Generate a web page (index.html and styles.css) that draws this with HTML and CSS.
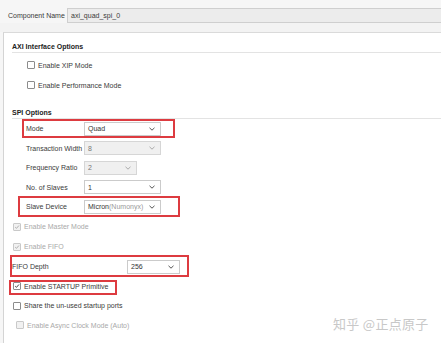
FILE: index.html
```html
<!DOCTYPE html>
<html>
<head>
<meta charset="utf-8">
<link rel="stylesheet" href="styles.css">
</head>
<body>
<div class="top">
  <span class="cname">Component Name</span>
  <div class="cinput">axi_quad_spi_0</div>
</div>
<div class="strip"></div>
<div class="panel">
  <div class="hdr hdr-axi">AXI Interface Options</div>
  <div class="crow indent"><span class="cb"></span><span>Enable XIP Mode</span></div>
  <div class="crow indent"><span class="cb"></span><span>Enable Performance Mode</span></div>

  <div class="hdr hdr-spi">SPI Options</div>
  <div class="frow mark-mode">
    <span class="flabel">Mode</span>
    <div class="sel"><span>Quad</span><svg class="chev" viewBox="0 0 6 4"><path d="M0.5 0.8 L3 3.2 L5.5 0.8"/></svg></div>
  </div>
  <div class="frow">
    <span class="flabel">Transaction Width</span>
    <div class="sel dis"><span>8</span><svg class="chev" viewBox="0 0 6 4"><path d="M0.5 0.8 L3 3.2 L5.5 0.8"/></svg></div>
  </div>
  <div class="frow">
    <span class="flabel">Frequency Ratio</span>
    <div class="sel dis short"><span>2</span><svg class="chev" viewBox="0 0 6 4"><path d="M0.5 0.8 L3 3.2 L5.5 0.8"/></svg></div>
  </div>
  <div class="frow">
    <span class="flabel">No. of Slaves</span>
    <div class="sel"><span>1</span><svg class="chev" viewBox="0 0 6 4"><path d="M0.5 0.8 L3 3.2 L5.5 0.8"/></svg></div>
  </div>
  <div class="frow mark-slave">
    <span class="flabel">Slave Device</span>
    <div class="sel"><span>Micron<em>(Numonyx)</em></span><svg class="chev" viewBox="0 0 6 4"><path d="M0.5 0.8 L3 3.2 L5.5 0.8"/></svg></div>
  </div>

  <div class="crow left dim h20"><span class="cb dcb"><svg viewBox="0 0 8 8"><path d="M1.6 4.2 L3.3 5.8 L6.6 2"/></svg></span><span>Enable Master Mode</span></div>
  <div class="crow left dim h20"><span class="cb dcb"><svg viewBox="0 0 8 8"><path d="M1.6 4.2 L3.3 5.8 L6.6 2"/></svg></span><span>Enable FIFO</span></div>
  <div class="fifo mark-fifo">
    <span class="fifolabel">FIFO Depth</span>
    <div class="sel fsel"><span>256</span><svg class="chev" viewBox="0 0 6 4"><path d="M0.5 0.8 L3 3.2 L5.5 0.8"/></svg></div>
  </div>
  <div class="crow left h19 mark-startup"><span class="cb ccb"><svg viewBox="0 0 8 8"><path d="M1.6 4.2 L3.3 5.8 L6.6 2"/></svg></span><span>Enable STARTUP Primitive</span></div>
  <div class="crow left h20"><span class="cb"></span><span>Share the un-used startup ports</span></div>
  <div class="crow async dim h19"><span class="cb dcb"></span><span>Enable Async Clock Mode (Auto)</span></div>

  <div class="wm">知乎 @正点原子</div>
</div>
</body>
</html>
```
FILE: styles.css
```css
html, body {
  margin: 0;
  padding: 0;
}
body {
  width: 441px;
  height: 343px;
  overflow: hidden;
  background: #f6f6f6;
  font-family: "Liberation Sans", Arial, sans-serif;
  font-size: 7px;
  color: #3a3a3a;
}
.top {
  display: flex;
  align-items: center;
  padding-top: 8px;
  height: 15px;
}
.cname {
  width: 59px;
  padding-left: 8px;
}
.cinput {
  flex: 1;
  height: 13px;
  line-height: 13px;
  border: 1px solid #cfcfcf;
  border-right: none;
  background: #ececec;
  padding-left: 3px;
}
.strip {
  height: 9px;
  background: #f3f3f3;
}
.panel {
  position: relative;
  margin-left: 3px;
  border-left: 1px solid #d4d4d4;
  border-top: 1px solid #dadada;
  background: #fff;
  height: 310px;
}
.hdr {
  margin-left: 8px;
  height: 10px;
  line-height: 10px;
  border-bottom: 1px solid #e3e3e3;
  font-weight: bold;
  color: #222;
}
.hdr-axi { margin-top: 9px; }
.hdr-spi { margin-top: 13px; }
.crow {
  display: flex;
  align-items: center;
  height: 20px;
  gap: 3px;
  position: relative;
}
.hdr-axi + .crow { margin-top: 2px; }
.indent { padding-left: 23px; }
.left { padding-left: 9px; }
.async { padding-left: 12px; }
.h20 { height: 20px; }
.h19 { height: 19px; }
.cb {
  width: 6px;
  height: 6px;
  border: 1px solid #8c8c8c;
  border-radius: 1px;
  background: #fff;
  display: flex;
  flex: none;
}
.cb svg {
  width: 6px;
  height: 6px;
  fill: none;
  stroke: #333;
  stroke-width: 1.2;
}
.dcb {
  border-color: #c9c9c9;
  background: #f1f1f1;
}
.dcb svg { stroke: #a8a8a8; }
.dim { color: #a9a9a9; }
.frow {
  position: relative;
  display: flex;
  align-items: center;
  height: 19.5px;
  padding-left: 22px;
}
.flabel {
  width: 58px;
}
.sel {
  box-sizing: border-box;
  width: 77px;
  height: 14px;
  border: 1px solid #cbcbcb;
  background: #fff;
  display: flex;
  align-items: center;
  justify-content: space-between;
  padding: 0 5px 0 3px;
  color: #333;
}
.sel em {
  font-style: normal;
  color: #999;
}
.sel.dis {
  background: #f0f0f0;
  border-color: #d6d6d6;
  color: #777;
}
.sel.short { width: 53px; }
.chev {
  width: 6px;
  height: 4px;
  fill: none;
  stroke: #555;
  stroke-width: 1;
}
.dis .chev { stroke: #aaa; }
.fifo {
  position: relative;
  display: flex;
  align-items: center;
  height: 20px;
  padding-left: 8px;
}
.fifolabel { width: 115px; }
.fsel { width: 53px; }
.mark-mode::after,
.mark-slave::after,
.mark-fifo::after,
.mark-startup::after {
  content: "";
  position: absolute;
  border: 2px solid #dd3b40;
  box-sizing: border-box;
}
.mark-mode::after { left: 18px; top: 0; width: 153px; height: 19px; }
.mark-slave::after { left: 14px; top: -1px; width: 162px; height: 21px; }
.mark-fifo::after { left: 6px; top: -2px; width: 179px; height: 22px; }
.mark-startup::after { left: 5px; top: 3px; width: 108px; height: 15px; }
.wm {
  position: absolute;
  left: 329px;
  top: 281px;
  font-family: "Noto Sans CJK SC", sans-serif;
  font-size: 13px;
  color: #c8c8c8;
  letter-spacing: 0.3px;
}
```
